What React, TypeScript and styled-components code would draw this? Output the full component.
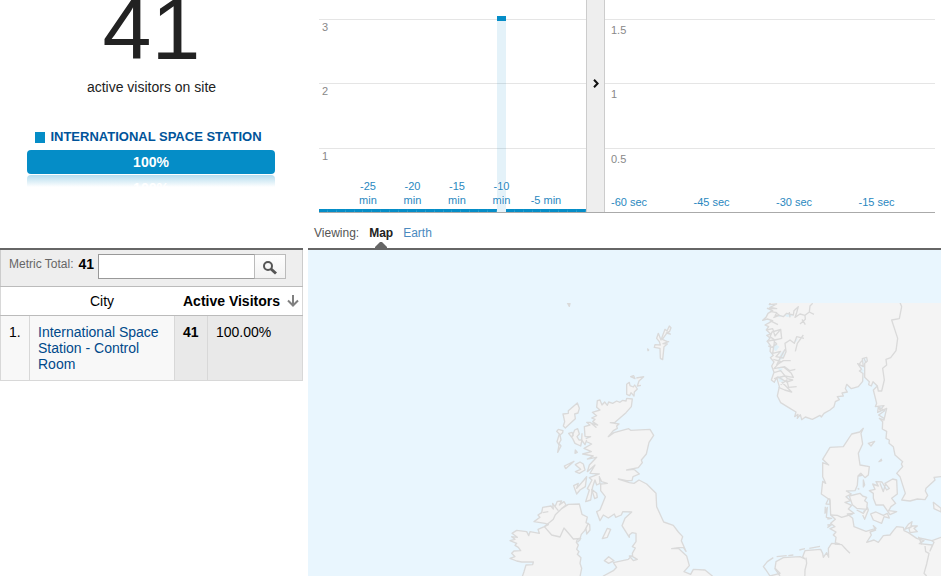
import React from "react";
import styled, { createGlobalStyle } from "styled-components";

const GlobalStyle = createGlobalStyle`
  * { box-sizing: border-box; }
  body {
    margin: 0;
    background: #fff;
    color: #000;
    font-family: "Liberation Sans", Arial, Helvetica, sans-serif;
    font-size: 14px;
  }
`;

const SIDE = "303px";

const Page = styled.main`
  display: flex;
  flex-direction: column;
  min-height: 100vh;
  overflow: hidden;
`;

const Split = styled.div<{ $grow?: boolean }>`
  display: grid;
  grid-template-columns: ${SIDE} minmax(0, 1fr);
  column-gap: 5px;
  flex: ${(p) => (p.$grow ? "1 0 auto" : "none")};
`;

/* Visitor counter */

const Counter = styled.section`
  display: flex;
  flex-direction: column;
  align-items: center;
`;

const Total = styled.div`
  height: 77px;
  display: flex;
  align-items: flex-end;
  color: #222;
  font-size: 88px;
  line-height: 96px;
`;

const Caption = styled.div`
  margin-top: 2px;
  color: #222;
  line-height: 16px;
`;

const Legend = styled.div`
  display: flex;
  align-items: center;
  gap: 5px;
  margin: 34px 6px 0 0;
  color: #00549a;
  font-size: 13px;
  font-weight: bold;
  line-height: 16px;
`;

const Swatch = styled.span`
  width: 10px;
  height: 11px;
  background: #058dc7;
`;

const Share = styled.div`
  align-self: stretch;
  margin: 5px 28px 0 27px;
  border-radius: 4px;
  background: #058dc7;
  color: #fff;
  font-weight: bold;
  line-height: 24px;
  text-align: center;
`;

const Reflection = styled.div`
  align-self: stretch;
  height: 12px;
  margin: 1px 28px 0 27px;
  padding-top: 5px;
  overflow: hidden;
  border-radius: 4px 4px 0 0;
  background: linear-gradient(#b4dcee, #fff);
  color: #fff;
  font-weight: bold;
  line-height: 16px;
  text-align: center;
`;

/* Pageview charts */

const ChartSide = styled.section`
  display: flex;
  flex-direction: column;
`;

const Charts = styled.div`
  display: grid;
  grid-template-columns: 267fr 19px 330fr;
  height: 213px;
  margin: 0 6px 0 11px;
  border-bottom: 1px solid #aaa;
`;

const Plot = styled.div`
  display: grid;
  > * { grid-area: 1 / 1; min-width: 0; }
`;

const Scale = styled.div<{ $pad: number; $indent: number }>`
  display: grid;
  grid-template-rows: 19px repeat(3, 1fr);
  color: #888;
  font-size: 11px;
  line-height: 12px;
  > span + span {
    border-top: 1px solid #e5e5e5;
    padding: ${(p) => p.$pad}px 0 0 ${(p) => p.$indent}px;
  }
`;

const Bars = styled.div`
  display: grid;
  grid-template-columns: repeat(30, 1fr);
  align-items: end;
`;

const Bar = styled.span<{ $tall?: boolean }>`
  height: ${(p) => (p.$tall ? "196px" : "3px")};
  border-top: ${(p) => (p.$tall ? 5 : 3)}px solid #058dc7;
  border-right: ${(p) => (p.$tall ? "0" : "1px solid #37a4d2")};
  background: rgba(5, 141, 199, 0.11);
`;

const Minutes = styled.div`
  display: grid;
  grid-template-columns: 3fr repeat(5, 5fr) 2fr;
  align-items: end;
  padding-bottom: 5px;
  color: #2a88c0;
  font-size: 11px;
  line-height: 14px;
  text-align: center;
  > span { text-shadow: 0 0 1px #fff, 1px 0 1px #fff, -1px 0 1px #fff; }
`;

const Seconds = styled.div`
  display: grid;
  grid-template-columns: repeat(4, 1fr);
  align-items: end;
  padding: 0 0 3px 6px;
  margin-right: -6px;
  color: #2a88c0;
  font-size: 11px;
  line-height: 14px;
`;

const Collapse = styled.button`
  display: flex;
  align-items: center;
  justify-content: center;
  padding: 0 0 46px;
  border: solid #ccc;
  border-width: 0 1px;
  background: #eee;
`;

const Viewing = styled.nav`
  display: flex;
  gap: 10px;
  padding: 12px 6px 0;
  height: 35px;
  color: #555;
  font-size: 12px;
  line-height: 16px;
`;

const ViewLink = styled.a<{ $current?: boolean }>`
  display: flex;
  flex-direction: column;
  align-items: center;
  justify-content: space-between;
  color: ${(p) => (p.$current ? "#222" : "#4a8ac0")};
  font-weight: ${(p) => (p.$current ? "bold" : "normal")};
  text-decoration: none;
`;

/* City table */

const Cities = styled.section`
  border-top: 2px solid #666;
`;

const Toolbar = styled.form`
  display: flex;
  align-items: flex-start;
  height: 36px;
  padding: 4px 16px 0 8px;
  border: solid #ccc;
  border-width: 0 1px;
  background: #eee;
`;

const Metric = styled.label`
  display: flex;
  gap: 5px;
  margin-right: 4px;
  color: #666;
  font-size: 12px;
  line-height: 21px;
  white-space: nowrap;
  b { color: #000; font-size: 14px; }
`;

const SearchBox = styled.input`
  flex: 1;
  min-width: 0;
  height: 25px;
  padding: 0 4px;
  border: 1px solid #999;
  border-right-color: #bbb;
  border-radius: 0;
  background: #fff;
  font: inherit;
`;

const SearchButton = styled.button`
  display: flex;
  align-items: center;
  justify-content: center;
  width: 31px;
  height: 25px;
  padding: 2px 0 0;
  border: 1px solid #bbb;
  border-left: 0;
  background: linear-gradient(#fdfdfd, #f2f2f2);
`;

const Table = styled.table`
  width: 100%;
  border-collapse: collapse;
  table-layout: fixed;
  line-height: 16px;
  border: 1px solid #d8d8d8;
`;

const NumberCol = styled.col`
  width: 29px;
`;

const CountCol = styled.col`
  width: 33px;
`;

const PercentCol = styled.col`
  width: 95px;
`;

const Head = styled.th<{ $sorted?: boolean }>`
  height: 29px;
  padding: 0 ${(p) => (p.$sorted ? 3 : 0)}px 0 0;
  border: solid #bbb;
  border-width: 1px 0;
  font-weight: ${(p) => (p.$sorted ? "bold" : "normal")};
  text-align: center;
`;

const Sort = styled.span`
  display: flex;
  align-items: center;
  justify-content: flex-end;
  gap: 7px;
  white-space: nowrap;
`;

const Cell = styled.td<{ $metric?: boolean; $strong?: boolean }>`
  height: 65px;
  padding: 8px;
  border: 1px solid #d8d8d8;
  background: ${(p) => (p.$metric ? "#e9e9e9" : "#f8f8f8")};
  font-weight: ${(p) => (p.$strong ? "bold" : "normal")};
  vertical-align: top;
  a { color: #00498a; text-decoration: none; }
`;

/* Map */

const MapArea = styled.section`
  display: flex;
  min-height: 328px;
  border-top: 2px solid #666;
  background: #e9f6fe;
  svg { flex: 1; width: 100%; min-height: 326px; height: 100%; }
`;

const britain =
  "M290 352L292 332 300 330 306 345 314 336 322 346 326 336 338 340 350 333 360 337 368 331 378 333 380 325 397 327 394 350 378 368 345 397 331 398 357 402 350 408 352 415 340 422 325 440 342 428 386 416 392 421 450 418 461 436 447 457 439 492 424 510 427 518 415 533 380 540 402 538 418 552 399 560 396 572 380 572 355 567 388 578 402 580 417 570 440 582 468 610 470 650 491 696 520 706 535 726 548 740 544 752 558 784 550 772 535 773 515 776 535 775 560 798 568 827 552 845 572 853 580 838 615 840 637 858 640 880 305 880 310 858 340 842 350 832 340 818 385 808 395 798 388 798 400 812 412 808 398 800 397 790 406 774 397 770 408 755 408 730 396 728 388 735 388 742 366 707 375 685 395 666 368 665 364 675 347 682 343 672 325 684 310 675 300 692 290 665 300 660 316 620 302 602 302 582 322 580 305 575 298 560 300 580 290 585 285 570 278 590 272 630 257 635 268 600 262 596 276 570 268 563 298 552 270 550 285 525 262 545 268 525 290 502 262 507 280 498 248 492 274 485 252 475 275 462 248 450 272 440 255 440 253 410 270 405 260 397 270 397 288 412 275 400 293 405 278 395 285 388 275 384 290 377 277 367 300 360Z";
const ireland =
  "M60 880L72 845 78 825 98 824 100 816 65 816 50 813 30 805 45 800 35 790 42 783 62 782 55 772 45 766 50 760 30 752 45 748 35 740 52 742 36 730 50 721 80 725 86 737 90 725 118 730 114 718 133 710 145 704 135 700 102 695 120 682 114 675 125 668 128 652 153 648 160 657 158 640 165 650 172 634 185 633 178 645 192 635 198 645 186 655 205 643 238 642 246 673 262 681 258 698 269 704 270 720 260 732 258 715 265 700 254 722 244 733 240 746 232 748 229 757 235 765 230 778 237 785 232 793 243 803 240 820 245 835 240 860 230 880Z";
const irishBorder =
  "M133 710L155 735 180 741 192 714 210 735 220 747 244 745M133 710L160 688 166 674 186 655M128 668L145 665M165 650L175 662M242 748L232 757";
const hebrides =
  "M232 339L238 355 234 369 224 372 226 386 212 399 196 414 190 408 194 395 189 372 205 370 205 362ZM170 424L175 418 189 422 188 428 180 435 183 450 177 460 183 468 173 487 177 465 171 455 178 432ZM206 430L216 427 220 435 215 442 224 420 233 416 238 432 231 440 237 450 246 450 242 468 225 460 218 446ZM246 430L245 450 255 464 260 450M193 528L222 514 197 536ZM226 524L240 516 250 522 255 540 238 550 226 545 242 538ZM221 587L235 580 230 595 252 570 260 560 256 590 240 600 230 612ZM226 480L232 487 225 490ZM275 598L290 610 292 622 284 626ZM307 746L322 715 332 718 322 742ZM313 812L326 800 342 812 326 820Z";
const northernIsles =
  "M202 38L210 40 208 49ZM443 177L446 180 444 182ZM380 283L388 277 390 287 400 291 404 285 412 297 403 306 402 318 393 308 389 317 380 313ZM392 260L401 257 405 266ZM409 264L431 260 417 273 412 288 423 286M470 145L475 130 483 150 495 118 501 123 508 108 513 113 509 124 499 129 511 132 502 127 495 137 487 148 502 155 506 155 489 161 502 162 492 170 488 209 481 205 480 175 463 172 465 164 481 165 478 155Z";

const scandinavia =
  "M65 30L58 44 80 42 60 52 80 56 52 55 68 62 54 70 48 82 38 91 52 87 68 92 58 98 45 105 56 110 49 120 62 132 50 136 60 144 52 154 62 168 60 184 70 196 61 203 72 216 65 228 72 247 64 270 73 277 80 262 88 290 82 318 92 338 120 355 138 366 134 380 144 373 142 385 151 374 155 389 166 381 187 388 210 376 214 381 222 370 240 360 252 350 256 335 268 329 262 320 280 318 276 309 292 306 286 296 290 283 304 296 325 290 338 274 339 250 328 243 335 238 323 221 340 230 337 206 350 202 352 213 344 220 344 262 358 275 356 284 364 288 369 275 382 288 370 300 380 340 376 350 402 347 390 360 385 350 383 367 410 355 402 390 388 385 398 395 397 417 410 424 408 445 418 450 417 460 430 470 435 495 458 515 454 522 458 530 440 550 450 560 466 610 455 630 480 633 502 627 525 629 533 616 526 603 528 595 555 570 552 562 573 560 600 560 600 30Z";
const scandinaviaBorder =
  "M447 30L455 50 448 86 425 90 443 145 438 182 422 203 408 208 410 225 398 235 403 270 395 303 385 303 382 288";
const fjords =
  "M60 64L80 68 75 78 88 76 100 80 110 70 130 75 132 62 145 50 140 68 135 82 150 72 165 76 178 66 180 48 188 40M165 76L166 88 150 102M156 88L166 104M178 66L192 73M70 83L88 76 78 68M118 66L120 82M60 92L84 104M50 120L68 116 75 138 92 118 95 145 74 150 60 140 66 126 92 118M50 154L70 150 80 162 66 172 55 168M74 150L68 190 92 184 78 200 100 204 108 185 105 160 120 150 133 160 140 140 162 145M160 135L142 160 136 184M105 178L90 205 80 225 100 212 122 212M70 208L92 214 72 236 104 230 120 242 136 238M100 230L124 250 130 262 104 258 72 266M72 248L92 242 112 266 128 270 110 276 82 260M92 284L110 270 116 292 140 290M86 292L104 300 125 306 108 289 95 276M336 212L328 222M342 205L348 219M384 350L404 362 386 375 402 385";
const fjordWater =
  "M82 76L98 77 88 82ZM100 76L118 71 130 78 112 81ZM74 160L88 170 78 184 68 176ZM92 190L105 178 100 205 84 214ZM80 232L98 236 92 246ZM82 258L94 260 104 274 88 276ZM132 158L144 143 140 154ZM335 238L342 240 338 249Z";
const continent =
  "M340 415L329 426 305 432 280 470 240 472 218 508 236 525 218 518 218 560 227 580 218 574 214 612 240 630 242 675 256 688 242 700 255 710 240 716 258 726 250 735 258 742 256 758 268 762 245 760 235 775 236 802 230 788 220 802 218 790 212 778 165 782 158 800 165 807 150 800 100 803 78 815 75 835 90 850 60 858 40 880 600 880 600 740 573 742 546 752 552 757 540 783 547 765 508 761 522 752 500 745 475 728 462 722 460 712 440 710 430 722 420 735 400 737 385 757 372 750 350 757 364 735 360 726 377 720 370 707 378 715 348 724 312 710 308 685 292 672 312 670 295 657 305 646 285 637 302 632 288 620 304 612 289 603 315 602 322 586 324 558 333 550 345 563 355 555 358 530 330 525 325 490 338 462 333 430Z";
const continentLines =
  "M242 675L262 676 275 682 308 672M254 762L275 764 290 780 300 790M168 803L170 820 165 840 164 880M525 768L527 785 537 790 530 822 522 850 530 858M505 740L515 762 508 744 546 752M74 835L90 858M60 858L48 840 40 830 52 815 70 803M80 800L110 797M115 797L130 795M148 780L165 776M178 775L210 769M236 625L228 642 240 643M226 650L225 670 232 652 229 682 245 685 232 687M232 705L245 704 232 713M239 625L240 645";
const danishIsles =
  "M298 618L330 610 338 618 350 622 344 632 352 638 350 658 320 655 307 644ZM378 575L396 576 410 600 418 595 405 580 428 567 440 570 442 612 425 625 437 640 423 650 416 662 440 665 420 674 400 645 378 645 370 625 370 610 358 602 375 598 368 582 385 588ZM362 672L378 666 400 676 412 670 418 684 402 680 395 700 370 690ZM390 580L400 605 407 580M550 637L573 655 573 666 552 656ZM464 718L475 703 486 695 483 708 502 708 492 715 502 725 480 728 477 715 488 708ZM355 460L374 454 363 468ZM387 515L394 508 395 512ZM340 570L344 585 340 591ZM332 550L336 556 326 558ZM320 660L340 670 352 652 355 660 344 688 338 675M323 595L328 598M340 665L348 660";

function CoastMap() {
  return (
    <MapArea aria-label="Visitor map">
      <svg viewBox="308 250 633 326" preserveAspectRatio="xMidYMid slice" role="img" aria-label="Map of the North Sea">
        <defs>
          <clipPath id="coverage">
            <rect x="308" y="303" width="700" height="400" />
          </clipPath>
        </defs>
        <g clipPath="url(#coverage)" fill="#f4f4f4" stroke="#dadada" strokeWidth="4" strokeLinejoin="round">
          <g transform="translate(500 290) scale(.33333)">
            <path d={britain} />
            <path d={ireland} />
            <path d={irishBorder} fill="none" />
            <path d={hebrides} />
            <path d={northernIsles} />
          </g>
          <g transform="translate(750 290) scale(.33333)">
            <path d={scandinavia} />
            <path d={fjordWater} fill="#e0f0f8" stroke="none" />
            <path d={fjords} fill="none" />
            <path d={scandinaviaBorder} fill="none" />
            <path d={continent} />
            <path d={continentLines} fill="none" />
            <path d={danishIsles} />
          </g>
        </g>
      </svg>
    </MapArea>
  );
}

const minuteLabels = ["-25", "-20", "-15", "-10"];
const secondLabels = ["-60 sec", "-45 sec", "-30 sec", "-15 sec"];
const pageviews = Array.from({ length: 30 }, (_, i) => (i === 20 ? 3 : 0));

export default function App() {
  return (
    <>
      <GlobalStyle />
      <Page>
        <Split>
          <Counter>
            <Total>41</Total>
            <Caption>active visitors on site</Caption>
            <Legend>
              <Swatch />
              INTERNATIONAL SPACE STATION
            </Legend>
            <Share>100%</Share>
            <Reflection aria-hidden="true">100%</Reflection>
          </Counter>
          <ChartSide>
            <Charts>
              <Plot>
                <Scale $pad={1} $indent={3}>
                  <span />
                  <span>3</span>
                  <span>2</span>
                  <span>1</span>
                </Scale>
                <Bars>
                  {pageviews.map((n, i) => (
                    <Bar key={i} $tall={n > 0} />
                  ))}
                </Bars>
                <Minutes>
                  <i />
                  {minuteLabels.map((m) => (
                    <span key={m}>
                      {m}
                      <br />
                      min
                    </span>
                  ))}
                  <span>-5 min</span>
                </Minutes>
              </Plot>
              <Collapse type="button" aria-label="Collapse chart">
                <svg width="6" height="9" viewBox="0 0 6 9" fill="none" stroke="#111" strokeWidth="2">
                  <path d="M1 .8L4.6 4.5 1 8.2" />
                </svg>
              </Collapse>
              <Plot>
                <Scale $pad={4} $indent={6}>
                  <span />
                  <span>1.5</span>
                  <span>1</span>
                  <span>0.5</span>
                </Scale>
                <Seconds>
                  {secondLabels.map((s) => (
                    <span key={s}>{s}</span>
                  ))}
                </Seconds>
              </Plot>
            </Charts>
            <Viewing>
              <span>Viewing:</span>
              <ViewLink href="#map" $current>
                Map
                <svg width="12" height="6" viewBox="0 0 12 6" fill="#666">
                  <path d="M0 6V5L5 0H7L12 5V6Z" />
                </svg>
              </ViewLink>
              <ViewLink href="#earth">Earth</ViewLink>
            </Viewing>
          </ChartSide>
        </Split>
        <Split $grow>
          <Cities>
            <Toolbar onSubmit={(e) => e.preventDefault()}>
              <Metric htmlFor="city-search">
                Metric Total: <b>41</b>
              </Metric>
              <SearchBox id="city-search" type="text" />
              <SearchButton type="submit" aria-label="Search">
                <svg width="16" height="15" viewBox="0 0 16 15" fill="none" stroke="#555">
                  <circle cx="6" cy="6" r="4" strokeWidth="2" />
                  <path d="M9 9L14 13.5" strokeWidth="3" />
                </svg>
              </SearchButton>
            </Toolbar>
            <Table>
              <colgroup>
                <NumberCol />
                <col />
                <CountCol />
                <PercentCol />
              </colgroup>
              <thead>
                <tr>
                  <Head />
                  <Head scope="col">City</Head>
                  <Head scope="col" colSpan={2} $sorted>
                    <Sort>
                      Active Visitors
                      <svg width="12" height="12" viewBox="0 0 12 12" fill="none" stroke="#808080" strokeWidth="2">
                        <path d="M6 0V10M1 5.5L6 10.5 11 5.5" />
                      </svg>
                    </Sort>
                  </Head>
                </tr>
              </thead>
              <tbody>
                <tr>
                  <Cell>1.</Cell>
                  <Cell>
                    <a href="#city">International Space Station - Control Room</a>
                  </Cell>
                  <Cell $metric $strong>41</Cell>
                  <Cell $metric>100.00%</Cell>
                </tr>
              </tbody>
            </Table>
          </Cities>
          <CoastMap />
        </Split>
      </Page>
    </>
  );
}
